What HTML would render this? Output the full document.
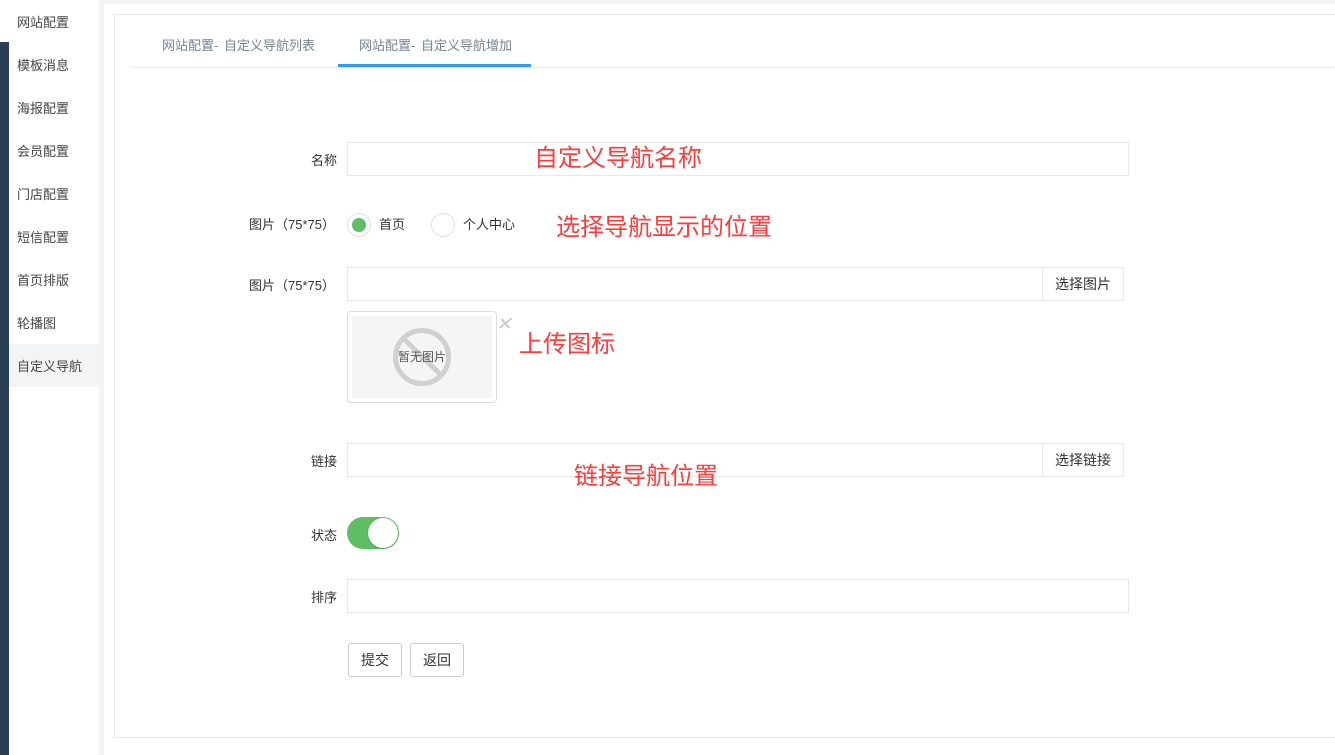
<!DOCTYPE html>
<html lang="zh"><head><meta charset="utf-8"><style>
*{box-sizing:border-box}
html,body{margin:0;padding:0;width:1335px;height:755px;overflow:hidden;background:#f3f3f4;font-family:"Liberation Sans","Noto Sans CJK SC",sans-serif;font-size:13px;color:#333}
.a{position:absolute;white-space:nowrap}
.side{left:0;top:0;width:99px;height:755px;background:#fff}
.dark{left:0;top:42px;width:9px;height:713px;background:#2a3f54}
.m{left:17px;font-size:13px;line-height:18px;color:#444}
.main{left:104px;top:4px;width:1231px;height:751px;background:#fff}
.box{left:114px;top:14px;width:1240px;height:724px;border:1px solid #e7eaf3;background:#fff}
.inp{height:34px;border:1px solid #e8e8e8;background:#fff}
.lab{font-size:13px;line-height:18px;color:#333}
.red{font-size:24px;line-height:32px;color:#ff3b3b}
.btn{height:34px;border:1px solid #ccc;border-radius:3px;background:#fff;text-align:center;line-height:32px;font-size:14px;color:#333}
.add{height:34px;border:1px solid #e8e8e8;background:#fff;text-align:center;line-height:32px;font-size:14px;color:#333}
</style></head><body>
<div class="a side"></div>
<div class="a dark"></div>
<div class="a" style="left:9px;top:344px;width:90px;height:43px;background:#f3f4f6"></div>
<div class="a m" style="top:14px">网站配置</div>
<div class="a m" style="top:57px">模板消息</div>
<div class="a m" style="top:100px">海报配置</div>
<div class="a m" style="top:143px">会员配置</div>
<div class="a m" style="top:186px">门店配置</div>
<div class="a m" style="top:229px">短信配置</div>
<div class="a m" style="top:272px">首页排版</div>
<div class="a m" style="top:315px">轮播图</div>
<div class="a m" style="top:358px">自定义导航</div>
<div class="a main"></div>
<div class="a box"></div>
<div class="a" style="left:132px;top:67px;width:1203px;height:1px;background:#e7eaf3"></div>
<div class="a" style="left:338px;top:64px;width:193px;height:3px;background:#3399ff"></div>
<div class="a" style="left:162px;top:37px;line-height:18px;color:#76838f;word-spacing:2px">网站配置- 自定义导航列表</div>
<div class="a" style="left:359px;top:37px;line-height:18px;color:#76838f;word-spacing:2px">网站配置- 自定义导航增加</div>

<div class="a lab" style="left:311px;top:152px">名称</div>
<div class="a inp" style="left:347px;top:142px;width:782px"></div>
<div class="a red" style="left:534px;top:143px">自定义导航名称</div>

<div class="a lab" style="left:249px;top:216px">图片（75*75）</div>
<div class="a" style="left:347px;top:213px;width:24px;height:24px;border:1px solid #e2e2e2;border-radius:50%;background:#fff"></div>
<div class="a" style="left:352px;top:218px;width:14px;height:14px;border-radius:50%;background:#5fbd65"></div>
<div class="a lab" style="left:379px;top:216px">首页</div>
<div class="a" style="left:431px;top:213px;width:24px;height:24px;border:1px solid #e2e2e2;border-radius:50%;background:#fff"></div>
<div class="a lab" style="left:463px;top:216px">个人中心</div>
<div class="a red" style="left:556px;top:212px">选择导航显示的位置</div>

<div class="a lab" style="left:249px;top:277px">图片（75*75）</div>
<div class="a inp" style="left:347px;top:267px;width:696px"></div>
<div class="a add" style="left:1042px;top:267px;width:82px">选择图片</div>
<div class="a" style="left:347px;top:311px;width:150px;height:92px;border:1px solid #ddd;border-radius:4px;background:#fff"></div>
<div class="a" style="left:352px;top:316px;width:140px;height:82px;background:#f5f5f5"></div>
<svg class="a" style="left:392px;top:327px" width="60" height="60" viewBox="0 0 60 60"><circle cx="30" cy="30" r="26.5" fill="none" stroke="#d0d0d0" stroke-width="5"/><path d="M11 11L50 49" stroke="#d0d0d0" stroke-width="5"/></svg>
<div class="a" style="left:398px;top:348px;font-size:12px;line-height:18px;color:#555">暂无图片</div>
<svg class="a" style="left:498px;top:316px" width="15" height="14" viewBox="0 0 15 14"><path d="M1.5 12L13.5 2.5M3.5 3L11.5 12" stroke="#c8c8c8" stroke-width="1.8"/></svg>
<div class="a red" style="left:519px;top:329px">上传图标</div>

<div class="a lab" style="left:311px;top:453px">链接</div>
<div class="a inp" style="left:347px;top:443px;width:696px"></div>
<div class="a add" style="left:1042px;top:443px;width:82px">选择链接</div>
<div class="a red" style="left:574px;top:461px">链接导航位置</div>

<div class="a lab" style="left:311px;top:527px">状态</div>
<div class="a" style="left:347px;top:517px;width:52px;height:32px;border-radius:16px;background:#5fbd65"></div>
<div class="a" style="left:368px;top:518px;width:30px;height:30px;border-radius:50%;background:#fff;box-shadow:0 1px 2px rgba(0,0,0,.2)"></div>

<div class="a lab" style="left:311px;top:589px">排序</div>
<div class="a inp" style="left:347px;top:579px;width:782px"></div>

<div class="a btn" style="left:348px;top:643px;width:54px">提交</div>
<div class="a btn" style="left:410px;top:643px;width:54px">返回</div>
</body></html>
